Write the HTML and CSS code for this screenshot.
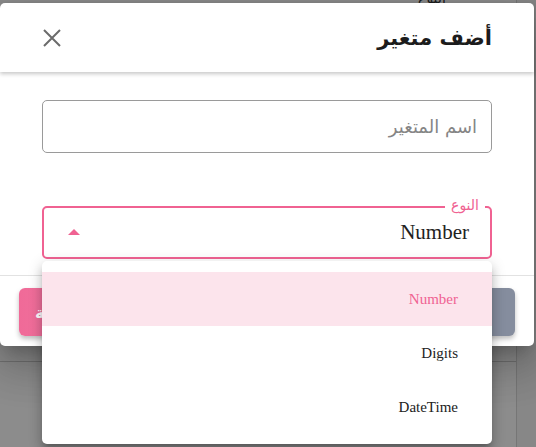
FILE: index.html
```html
<!DOCTYPE html>
<html lang="ar" dir="rtl">
<head>
<meta charset="utf-8">
<title>أضف متغير</title>
<link rel="stylesheet" href="styles.css">
</head>
<body>
<div class="page">
  <div class="page-main"><span class="page-label">النوع</span></div>
  <div class="page-side"></div>
</div>
<div class="overlay"></div>

<div class="dialog">
  <header class="dialog-header">
    <h2 class="dialog-title">أضف متغير</h2>
    <button class="close-btn" aria-label="close">
      <svg width="18" height="18" viewBox="0 0 18 18"><path d="M1 1L17 17M17 1L1 17" stroke="#6b6b6b" stroke-width="2" fill="none"/></svg>
    </button>
  </header>
  <div class="dialog-body">
    <div class="text-field"><span class="placeholder">اسم المتغير</span></div>
    <div class="select-field">
      <span class="select-label">النوع</span>
      <span class="select-value" lang="en">Number</span>
      <span class="select-arrow"></span>
    </div>
  </div>
  <footer class="dialog-footer">
    <button class="btn btn-secondary">إلغاء</button>
    <button class="btn btn-primary">إضافة</button>
  </footer>
</div>

<ul class="menu" lang="en">
  <li class="menu-item selected">Number</li>
  <li class="menu-item">Digits</li>
  <li class="menu-item">DateTime</li>
</ul>
</body>
</html>
```

FILE: styles.css
```css
* { box-sizing: border-box; }
html, body { margin: 0; padding: 0; }
body {
  width: 536px;
  height: 447px;
  overflow: hidden;
  position: relative;
  background: #fff;
  font-family: "DejaVu Sans", sans-serif;
}
.page {
  display: grid;
  grid-template-columns: 516px 1fr;
  direction: ltr;
  height: 447px;
}
.page-main {
  height: 362px;
  border-bottom: 1px solid #d0d0d0;
  position: relative;
}
.page-label {
  position: absolute;
  right: 70px;
  top: -10px;
  font-size: 14px;
  color: #333;
}
.page-side {
  border-left: 1px solid #d8d8d8;
  background: #f6f6f6;
}
.overlay {
  position: absolute;
  inset: 0;
  background: rgba(0, 0, 0, 0.45);
}
.dialog {
  position: absolute;
  left: 0;
  top: 3px;
  width: 534px;
  background: #fff;
  border-radius: 5px;
  box-shadow: 0 11px 15px -7px rgba(0,0,0,.2), 0 24px 38px 3px rgba(0,0,0,.14), 0 9px 46px 8px rgba(0,0,0,.12);
  display: flex;
  flex-direction: column;
}
.dialog-header {
  height: 69px;
  display: flex;
  align-items: center;
  justify-content: space-between;
  padding: 0 42px 0 43px;
  box-shadow: 0 2px 4px rgba(0,0,0,.22);
  position: relative;
  z-index: 1;
}
.dialog-title {
  margin: 0;
  font-size: 21px;
  font-weight: bold;
  color: #1c1c1c;
}
.close-btn {
  border: 0;
  background: none;
  padding: 0;
  width: 18px;
  height: 18px;
  display: flex;
}
.dialog-body {
  padding: 28px 42px 16px;
  display: flex;
  flex-direction: column;
  gap: 53px;
  border-bottom: 1px solid #e2e2e2;
}
.text-field {
  height: 53px;
  border: 1px solid #9a9a9a;
  border-radius: 5px;
  display: flex;
  align-items: center;
  padding: 0 14px;
}
.placeholder {
  font-size: 18px;
  color: #858585;
}
.select-field {
  position: relative;
  height: 53px;
  border: 2px solid #f06292;
  border-radius: 5px;
  display: flex;
  align-items: center;
  justify-content: space-between;
  padding: 0 21px 0 24px;
}
.select-label {
  position: absolute;
  right: 5px;
  top: -11px;
  padding: 0 6px;
  background: #fff;
  font-size: 14px;
  line-height: 16px;
  color: #f06292;
}
.select-value {
  font-family: "Liberation Serif", "Times New Roman", serif;
  font-size: 21px;
  color: #222;
}
.select-arrow {
  width: 0;
  height: 0;
  border-left: 6.5px solid transparent;
  border-right: 6.5px solid transparent;
  border-bottom: 6px solid #f06292;
  margin-top: -1px;
}
.dialog-footer {
  display: flex;
  justify-content: space-between;
  padding: 12px 19px 10px;
}
.btn {
  height: 48px;
  border: 0;
  border-radius: 6px;
  padding: 0 16px;
  font-family: "DejaVu Sans", sans-serif;
  font-size: 16px;
  font-weight: bold;
  color: #fff;
  box-shadow: 0 3px 5px rgba(0,0,0,.25);
}
.btn-primary {
  background: linear-gradient(90deg, #f06a98, #ee7aa2);
}
.btn-secondary {
  background: #858d9e;
  width: 100px;
}
.menu {
  position: absolute;
  left: 42px;
  top: 261px;
  width: 450px;
  height: 183px;
  margin: 0;
  padding: 11px 0 10px;
  list-style: none;
  background: #fff;
  border-radius: 5px;
  box-shadow: 0 5px 5px -3px rgba(0,0,0,.2), 0 8px 10px 1px rgba(0,0,0,.14), 0 3px 14px 2px rgba(0,0,0,.12);
}
.menu-item {
  height: 54px;
  line-height: 54px;
  padding-right: 34px;
  font-family: "Liberation Serif", "Times New Roman", serif;
  font-size: 15px;
  color: #222;
}
.menu-item.selected {
  background: #fce4ec;
  color: #f06292;
}
```
